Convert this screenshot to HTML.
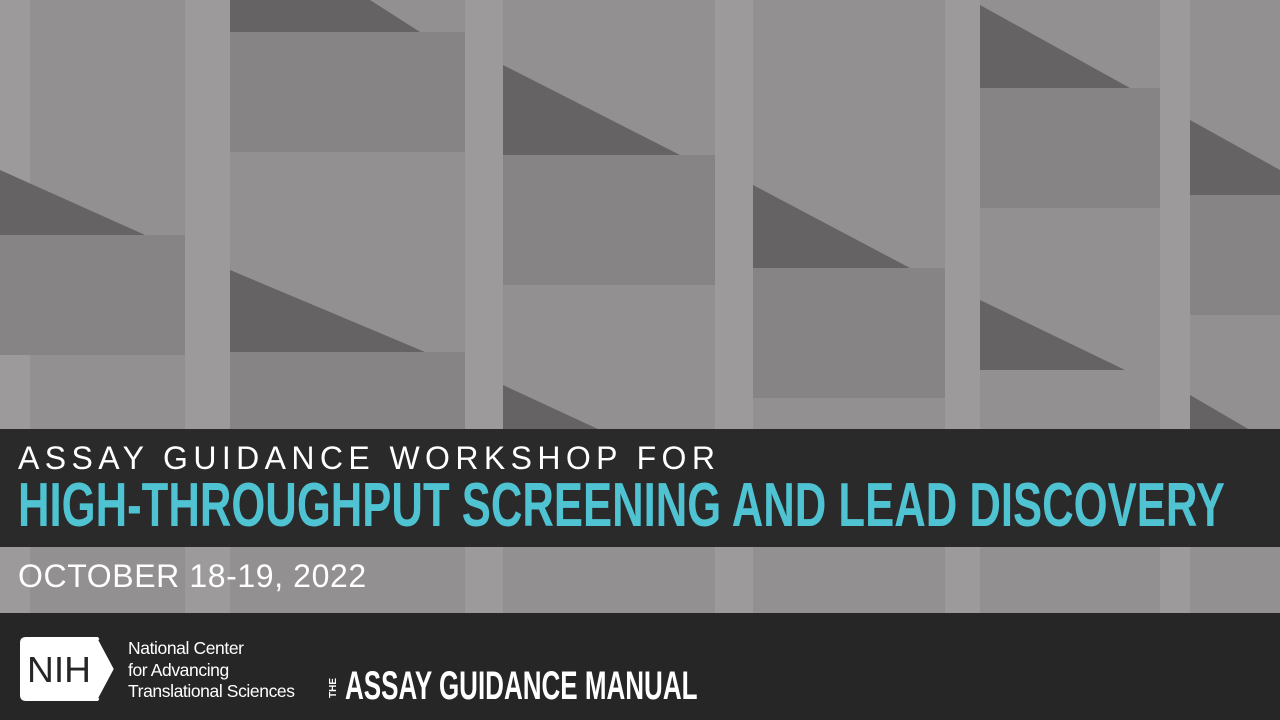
<!DOCTYPE html>
<html><head><style>
body{margin:0;width:1280px;height:720px;overflow:hidden;background:#8e8c8d;position:relative;font-family:"Liberation Sans",sans-serif}
.abs{position:absolute}
.t{white-space:nowrap;transform-origin:0 0}
</style></head><body>
<svg class="abs" style="left:0;top:0" width="1280" height="720">
<rect width="1280" height="720" fill="#929091"/>
<g fill="#9c9a9b">
<rect x="0" y="0" width="30" height="720"/>
<rect x="185" y="0" width="45" height="720"/>
<rect x="465" y="0" width="38" height="720"/>
<rect x="715" y="0" width="38" height="720"/>
<rect x="945" y="0" width="35" height="720"/>
<rect x="1160" y="0" width="30" height="720"/>
</g>
<g fill="#868485">
<rect x="230" y="32" width="235" height="120"/>
<rect x="503" y="155" width="212" height="130"/>
<rect x="753" y="268" width="192" height="130"/>
<rect x="980" y="88" width="180" height="120"/>
<rect x="0" y="235" width="185" height="120"/>
<rect x="230" y="352" width="235" height="77"/>
<rect x="1190" y="195" width="90" height="120"/>
</g>
<g fill="#656364">
<polygon points="0,170 0,235 145,235"/>
<polygon points="230,0 230,32 420,32 370,0"/>
<polygon points="230,270 230,352 425,352"/>
<polygon points="503,65 503,155 680,155"/>
<polygon points="503,385 503,430 600,430"/>
<polygon points="753,185 753,268 910,268"/>
<polygon points="980,5 980,88 1130,88"/>
<polygon points="980,300 980,370 1125,370"/>
<polygon points="1190,120 1190,195 1280,195 1280,170"/>
<polygon points="1190,395 1190,430 1250,430"/>
</g>
</svg>
<div class="abs" style="left:0;top:429px;width:1280px;height:118px;background:#2a2a2a"></div>
<div class="abs" style="left:0;top:613px;width:1280px;height:107px;background:#262626"></div>
<div class="abs t" style="left:18px;top:440px;color:#fff;font-size:32px;letter-spacing:5.4px">ASSAY GUIDANCE WORKSHOP FOR</div>
<div class="abs t" style="left:18px;top:470px;color:#4fc3d1;font-size:62px;font-weight:bold;transform:scaleX(0.704)">HIGH-THROUGHPUT SCREENING AND LEAD DISCOVERY</div>
<div class="abs t" style="left:18px;top:558px;color:#fff;font-size:32px;letter-spacing:0.6px">OCTOBER 18-19, 2022</div>
<svg class="abs" style="left:20px;top:637px" width="100" height="64">
<path d="M6 0H78L98 32L78 64H6Q0 64 0 58V6Q0 0 6 0Z" fill="#fff"/>
<path d="M80 2L96 32L80 62" fill="none" stroke="#262626" stroke-width="4"/>
<text x="7" y="45" font-family="Liberation Sans" font-size="36" fill="#262626" textLength="64" lengthAdjust="spacingAndGlyphs">NIH</text>
</svg>
<div class="abs" style="left:128px;top:638px;color:#fff;font-size:17.5px;line-height:21.5px;letter-spacing:-0.4px">National Center<br>for Advancing<br>Translational Sciences</div>
<div class="abs t" style="left:328px;top:698px;color:#fff;font-size:10px;font-weight:bold;transform:rotate(-90deg)">THE</div>
<div class="abs t" style="left:345px;top:664px;color:#fff;font-size:40px;font-weight:bold;transform:scaleX(0.65)">ASSAY GUIDANCE MANUAL</div>
</body></html>
